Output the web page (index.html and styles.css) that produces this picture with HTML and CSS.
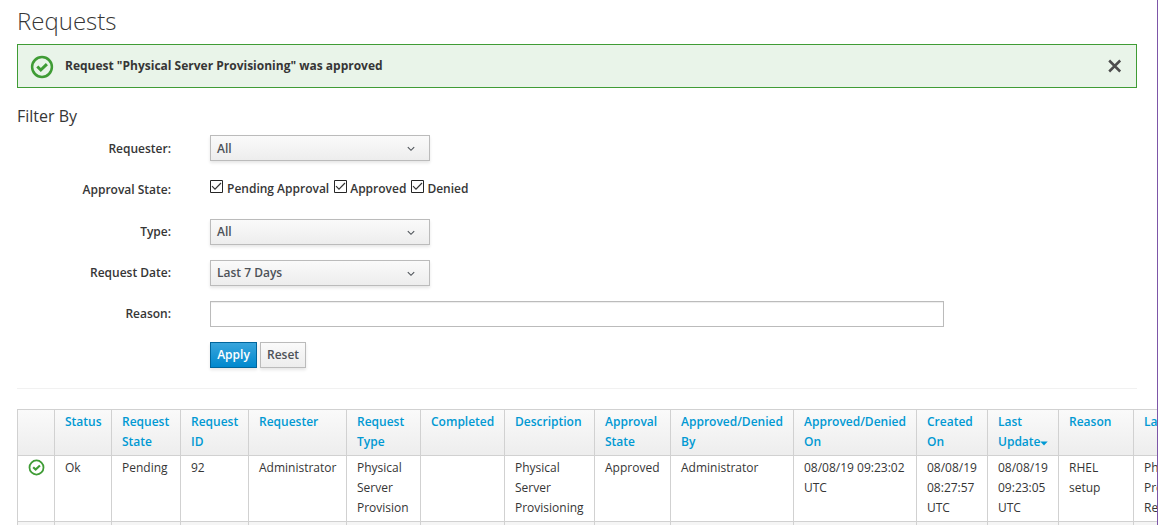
FILE: index.html
```
<!DOCTYPE html>
<html lang="en">
<head>
<meta charset="utf-8">
<title>Requests</title>
<link rel="stylesheet" href="styles.css">
</head>
<body>
<svg class="defs" width="0" height="0">
  <symbol id="ok" viewBox="0 0 24 24"><circle cx="12" cy="12" r="9.900" fill="none" stroke="#3f9c35" stroke-width="2.500"/><path d="M7.300 11.500l3.500 3.500 6.100-5.900" fill="none" stroke="#3f9c35" stroke-width="3"/></symbol>
  <symbol id="down" viewBox="0 0 8 6"><path d="M.8 1.200L4 4.300l3.200-3.100" fill="none" stroke="#4d5258" stroke-width="1.100"/></symbol>
  <symbol id="box" viewBox="0 0 13 13"><path d="M.5.5h12v12H.5z" fill="#fff" stroke="#262626"/><path d="M2 6.200l3 3L11 3" fill="none" stroke="#333" stroke-width="1.200"/></symbol>
</svg>
<main class="page">
  <h1 class="title">Requests</h1>
  <div class="alert">
    <svg class="alert-icon"><use href="#ok"/></svg>
    <strong class="alert-text">Request "Physical Server Provisioning" was approved</strong>
    <svg class="close" viewBox="0 0 14 14"><path d="M1.200 1.500l11 11M12.200 1.500l-11 11" stroke="#4d4d4d" stroke-width="2.500"/></svg>
  </div>
  <h3 class="subtitle">Filter By</h3>
  <form class="filters">
    <div class="row row-low"><span class="label">Requester:</span><div class="select">All<svg class="caret"><use href="#down"/></svg></div></div>
    <div class="row row-checks"><span class="label">Approval State:</span>
      <div class="checks">
        <span class="check check-first"><svg class="tick"><use href="#box"/></svg>Pending Approval</span>
        <span class="check"><svg class="tick"><use href="#box"/></svg>Approved</span>
        <span class="check"><svg class="tick"><use href="#box"/></svg>Denied</span>
      </div>
    </div>
    <div class="row"><span class="label">Type:</span><div class="select">All<svg class="caret"><use href="#down"/></svg></div></div>
    <div class="row"><span class="label">Request Date:</span><div class="select">Last 7 Days<svg class="caret"><use href="#down"/></svg></div></div>
    <div class="row"><span class="label">Reason:</span><input class="input" type="text"></div>
    <div class="row"><span class="label"></span><div class="buttons"><button class="btn btn-primary" type="button">Apply</button><button class="btn btn-default" type="button">Reset</button></div></div>
  </form>
  <table class="table">
    <colgroup><col class="w37"><col class="w57"><col class="w69"><col class="w68"><col class="w98"><col class="w74"><col class="w84"><col class="w90"><col class="w76"><col class="w123"><col class="w123"><col class="w71"><col class="w71"><col class="w75"><col class="w110"></colgroup>
    <thead><tr class="head">
      <th></th><th>Status</th><th>Request<br>State</th><th>Request<br>ID</th><th>Requester</th><th>Request<br>Type</th><th>Completed</th><th>Description</th><th>Approval<br>State</th><th>Approved/Denied<br>By</th><th>Approved/Denied<br>On</th><th>Created<br>On</th><th>Last<br>Update<svg class="sort" viewBox="0 0 8 5"><path d="M.3.5h7.400L4 4.500z" fill="#0099d3"/></svg></th><th>Reason</th><th>Last</th>
    </tr></thead>
    <tbody>
      <tr class="data">
        <td><svg class="state"><use href="#ok"/></svg></td><td>Ok</td><td>Pending</td><td>92</td><td>Administrator</td><td>Physical<br>Server<br>Provision</td><td></td><td>Physical<br>Server<br>Provisioning</td><td>Approved</td><td>Administrator</td><td>08/08/19 09:23:02<br>UTC</td><td>08/08/19<br>08:27:57<br>UTC</td><td>08/08/19<br>09:23:05<br>UTC</td><td>RHEL<br>setup</td><td>Physical<br>Provision<br>Request</td>
      </tr>
      <tr class="data alt"><td></td><td></td><td></td><td></td><td></td><td></td><td></td><td></td><td></td><td></td><td></td><td></td><td></td><td></td><td></td></tr>
    </tbody>
  </table>
</main>
</body>
</html>
```
FILE: styles.css
```
* { box-sizing: border-box; }
html, body { margin: 0; height: 525px; overflow: hidden; }
body { background: #fff; color: #363636; font: 12px/20px "Open Sans", sans-serif; }
.defs { display: none; }
.page { width: 1158px; height: 525px; padding: 5px 20px 0 17px; border-right: 1px solid #7d56a8; overflow: hidden; }
.title { margin: 0 0 8px; height: 31px; font-size: 24px; line-height: 31px; font-weight: 300; }
.alert { display: flex; align-items: center; height: 44px; padding: 0 14px 0 12px; border: 1px solid #3f9c35; background: #e9f4e9; }
.alert-icon { width: 24px; height: 24px; margin: 1px 11px 0 0; }
.alert-text { font-weight: 700; flex: 1; }
.close { width: 14px; height: 14px; }
.subtitle { margin: 18px 0 9px; height: 20px; font-size: 16px; line-height: 20px; font-weight: 400; }
.filters { display: flex; flex-direction: column; gap: 15px; height: 254px; padding-bottom: 20px; border-bottom: 1px solid #f1f1f1; font-weight: 600; }
.row { display: flex; align-items: center; height: 26px; flex: none; }
.row-low .label { padding-top: 2px; }
.row-low .select { padding-top: 1px; }
.row-low .caret { margin-top: 1px; }
.row-checks { height: 28px; }
.label { width: 154px; margin-right: 39px; text-align: right; }
.select { display: flex; align-items: center; justify-content: space-between; width: 220px; height: 26px; padding: 0 14px 0 6px; border: 1px solid #bbb; background: linear-gradient(#fafafa, #ededed); box-shadow: 0 2px 3px rgba(3,3,3,.1); color: #4d5258; }
.caret { width: 8px; height: 6px; margin-top: 2px; }
.checks { display: flex; gap: 5px; padding-bottom: 3px; }
.check { display: flex; align-items: center; gap: 3px; }
.check-first { gap: 4px; }
.tick { width: 13px; height: 13px; margin-bottom: 5px; }
.input { width: 734px; height: 26px; padding: 2px 6px; border: 1px solid #bbb; box-shadow: inset 0 1px 1px rgba(3,3,3,.075); background: #fff; }
.buttons { display: flex; gap: 3px; }
.btn { height: 26px; padding: 0 6px; border: 1px solid #bbb; font: 600 12px/20px "Open Sans", sans-serif; box-shadow: 0 2px 3px rgba(3,3,3,.1); }
.btn-primary { width: 47px; color: #fff; border-color: #00659c; background: linear-gradient(#39a5dc, #0088ce); }
.btn-default { width: 46px; color: #4d5258; background: linear-gradient(#fafafa, #ededed); }
.table { width: 1227px; margin-top: 20px; border-collapse: separate; border-spacing: 0; table-layout: fixed; border-left: 1px solid #d1d1d1; border-top: 1px solid #d1d1d1; }
.table th, .table td { padding: 2px 0 3px 10px; border-right: 1px solid #d1d1d1; border-bottom: 1px solid #d1d1d1; text-align: left; vertical-align: top; white-space: nowrap; overflow: hidden; }
.head { height: 46px; background: linear-gradient(#fafafa, #ededed); }
.head th { font-weight: 600; color: #0099d3; }
.data { height: 66px; }
.alt { background: #f5f5f5; }
.state { display: block; width: 17px; height: 17px; margin-top: 1px; }
.sort { width: 8px; height: 5px; }
.w37 { width: 37px; } .w57 { width: 57px; } .w69 { width: 69px; } .w68 { width: 68px; } .w98 { width: 98px; }
.w74 { width: 74px; } .w84 { width: 84px; } .w90 { width: 90px; } .w76 { width: 76px; } .w123 { width: 123px; }
.w71 { width: 71px; } .w75 { width: 75px; } .w110 { width: 110px; }
```
